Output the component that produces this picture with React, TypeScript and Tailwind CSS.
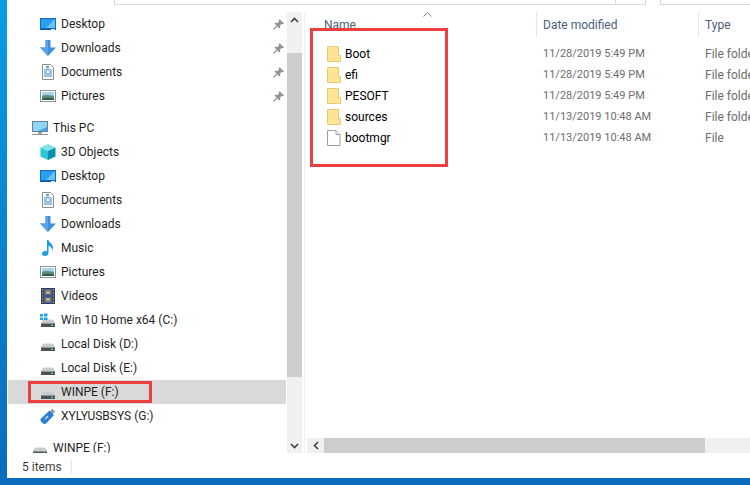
const FONT = "font-['Roboto','Open_Sans',sans-serif]";

function DesktopIcon() {
  return (
    <svg width="16" height="16" viewBox="0 0 16 16">
      <rect x="0" y="2" width="16" height="12" fill="#0a6cc4" />
      <path d="M1 3h14v9H1z" fill="#2a9df0" />
      <path d="M6 12L15 3v9z" fill="#6cc3f5" />
      <rect x="0" y="13" width="16" height="1" fill="#0a5aa8" />
      <rect x="11" y="13" width="4" height="1" fill="#cfe6f7" />
    </svg>
  );
}

function DownloadIcon() {
  return (
    <svg width="16" height="16" viewBox="0 0 16 16">
      <path d="M5.500 0h5v7.500H16L8 16 0 7.500h5.500z" fill="#3f8fdd" />
      <path d="M5.500 0H8v16L0 7.500h5.500z" fill="#5aa5e8" />
    </svg>
  );
}

function DocumentIcon() {
  return (
    <svg width="16" height="16" viewBox="0 0 16 16">
      <path d="M2.500 0.500h8l3 3v12h-11z" fill="#fff" stroke="#8a8f94" />
      <path d="M4 6h8M4 8h3M9 8h3M4 10h8M4 12h8" stroke="#3b88c8" />
      <path d="M6 2.500h3M6 4h3" stroke="#3b88c8" />
    </svg>
  );
}

function PictureIcon() {
  return (
    <svg width="16" height="16" viewBox="0 0 16 16">
      <rect x="0.500" y="2.500" width="15" height="11" fill="#fff" stroke="#8d9296" />
      <rect x="2" y="4" width="12" height="4" fill="#a9d3ec" />
      <path d="M2 8c3-1.500 6-1 12 0v4H2z" fill="#5f8a82" />
      <path d="M2 10.500c4-1 8-.5 12 0V12H2z" fill="#34524e" />
    </svg>
  );
}

function PcIcon() {
  return (
    <svg width="16" height="16" viewBox="0 0 16 16">
      <rect x="0.500" y="1.500" width="15" height="10" fill="#3fa9e8" stroke="#6b7f8e" />
      <path d="M1 2h14v5L6 11H1z" fill="#8fd6f7" />
      <rect x="6" y="12" width="4" height="2" fill="#9aa6ad" />
      <rect x="0" y="14" width="16" height="1" fill="#8d99a1" />
    </svg>
  );
}

function CubeIcon() {
  return (
    <svg width="16" height="16" viewBox="0 0 16 16">
      <path d="M8 0l7.500 3.500L8 7 .5 3.500z" fill="#7fe3ea" />
      <path d="M.5 3.500L8 7v9L.5 12.500z" fill="#2cc5d6" />
      <path d="M15.500 3.500L8 7v9l7.500-3.500z" fill="#0f8fb0" />
    </svg>
  );
}

function MusicIcon() {
  return (
    <svg width="16" height="16" viewBox="0 0 16 16">
      <path d="M7 0h1.500c.3 2.500 4.500 3.500 4.500 7.500 0 1-.3 2-1 3 .2-2.500-1.300-4-3.500-4.800V13c0 1.800-1.700 3-3.500 3S2 15 2 13.600 3.600 11 5.200 11c.7 0 1.300.1 1.800.4z" fill="#1e9be8" />
    </svg>
  );
}

function VideoIcon() {
  return (
    <svg width="16" height="16" viewBox="0 0 16 16">
      <rect x="1" y="0" width="14" height="16" fill="#3c3f44" />
      <path d="M2 2h1M2 5h1M2 8h1M2 11h1M2 14h1M13 2h1M13 5h1M13 8h1M13 11h1M13 14h1" stroke="#d8d8d8" />
      <rect x="4" y="1" width="8" height="6.500" fill="#4a6fb5" />
      <rect x="4" y="8.500" width="8" height="6.500" fill="#4a6fb5" />
      <path d="M6 3h4v3H6zM6 10h4v3H6z" fill="#d9a93a" />
    </svg>
  );
}

function DriveIcon({ win = false }: { win?: boolean }) {
  return (
    <svg width="16" height="16" viewBox="0 0 16 16">
      <path d="M3 7.500h10l2 3.500H1z" fill="#c9cccf" />
      <rect x="1" y="11" width="14" height="4" fill="#4d5257" />
      <rect x="1" y="11" width="14" height="1" fill="#8b9095" />
      <rect x="11" y="12.500" width="2" height="1.500" fill="#3fcf5a" />
      {win && <path d="M0 2h3v2.500H0zM4 1.500h3.500V4.500H4zM0 5.500h3V8H0zM4 5.500h3.500V8H4z" fill="#19a5e6" />}
    </svg>
  );
}

function UsbIcon() {
  return (
    <svg width="16" height="16" viewBox="0 0 16 16">
      <path d="M10 4l2-3.500 3.500 3L13 6z" fill="#9aa1a8" />
      <path d="M9.500 2.500l4.500 4.500-8 8.500c-1 .7-2 .7-3 0L1 13.500c-.7-1-.7-2 0-3z" fill="#2c7fd0" />
      <path d="M5 11l3-3" stroke="#bcdcf5" strokeWidth="1.500" />
    </svg>
  );
}

function PinIcon() {
  return (
    <svg width="11" height="11" viewBox="0 0 11 11">
      <path d="M6.500 0L11 4.500 9.800 5.200 8.800 4.800 7 6.800 7.300 8.800 6.300 9.600 1.500 4.800 2.300 3.800 4.300 4.100 6.200 2.200 5.800 1.200z" fill="#8b949c" />
      <path d="M3.600 7.300L0.600 10.400" stroke="#8b949c" strokeWidth="1.300" />
    </svg>
  );
}

function FolderIcon() {
  return (
    <svg width="14" height="16" viewBox="0 0 14 16">
      <path d="M0.500 0.500h11v15h-11z" fill="#fde594" stroke="#e8cb7a" />
      <path d="M11.500 9.500h2v6h-2z" fill="#fde594" stroke="#e8cb7a" />
      <path d="M11 10h1.500v5H11z" fill="#fde594" />
    </svg>
  );
}

function FileIcon() {
  return (
    <svg width="14" height="16" viewBox="0 0 14 16">
      <path d="M0.500 0.500h8.500l4 4v11h-12.500z" fill="#fff" stroke="#9aa0a6" />
      <path d="M9 .5v4h4" fill="#f3f3f3" stroke="#9aa0a6" />
    </svg>
  );
}

function Row({ icon, label, level = 2, pinned = false, selected = false }: { icon: React.ReactNode; label: string; level?: number; pinned?: boolean; selected?: boolean }) {
  return (
    <div className={`relative mx-px flex h-6 shrink-0 items-center ${selected ? "bg-[#d9d9d9]" : ""} ${level === 2 ? "pl-[32px]" : "pl-[24px]"}`}>
      <span className="flex w-4 shrink-0 items-center justify-center">{icon}</span>
      <span className="ml-[5px] whitespace-nowrap text-[12px] text-[#1f1f1f]">{label}</span>
      {pinned && (
        <span className="absolute left-[265px] top-[7px]">
          <PinIcon />
        </span>
      )}
      {selected && <div className="absolute left-[20px] top-[1px] h-[22px] w-[124px] border-[3px] border-[#ec4040]" />}
    </div>
  );
}

const FILES = [
  { name: "Boot", date: "11/28/2019 5:49 PM", type: "File folder", folder: true },
  { name: "efi", date: "11/28/2019 5:49 PM", type: "File folder", folder: true },
  { name: "PESOFT", date: "11/28/2019 5:49 PM", type: "File folder", folder: true },
  { name: "sources", date: "11/13/2019 10:48 AM", type: "File folder", folder: true },
  { name: "bootmgr", date: "11/13/2019 10:48 AM", type: "File", folder: false },
];

export default function App() {
  return (
    <div className={`flex h-[485px] w-[750px] flex-col overflow-hidden bg-gradient-to-b from-[#0a9ce2] to-[#0a6cbc] pb-[7px] pl-[7px] ${FONT}`}>
      <div className="flex min-h-0 flex-1 flex-col bg-white">
        {/* toolbar remains */}
        <div className="flex h-3 shrink-0 items-start">
          <div className="ml-[107px] flex h-[5px] w-[532px] justify-end border-b border-l border-r border-[#d9d9d9]">
            <div className="mr-[29px] h-full w-px bg-[#d9d9d9]" />
          </div>
          <div className="ml-[14px] h-[5px] flex-1 border-b border-l border-[#d9d9d9]" />
        </div>

        <div className="flex h-[441px] shrink-0">
          <div className="flex h-full w-[280px] shrink-0 flex-col overflow-hidden">
            <Row icon={<DesktopIcon />} label="Desktop" pinned />
            <Row icon={<DownloadIcon />} label="Downloads" pinned />
            <Row icon={<DocumentIcon />} label="Documents" pinned />
            <Row icon={<PictureIcon />} label="Pictures" pinned />
            <div className="mt-2" />
            <Row icon={<PcIcon />} label="This PC" level={1} />
            <Row icon={<CubeIcon />} label="3D Objects" />
            <Row icon={<DesktopIcon />} label="Desktop" />
            <Row icon={<DocumentIcon />} label="Documents" />
            <Row icon={<DownloadIcon />} label="Downloads" />
            <Row icon={<MusicIcon />} label="Music" />
            <Row icon={<PictureIcon />} label="Pictures" />
            <Row icon={<VideoIcon />} label="Videos" />
            <Row icon={<DriveIcon win />} label="Win 10 Home x64 (C:)" />
            <Row icon={<DriveIcon />} label="Local Disk (D:)" />
            <Row icon={<DriveIcon />} label="Local Disk (E:)" />
            <Row icon={<DriveIcon />} label="WINPE (F:)" selected />
            <Row icon={<UsbIcon />} label="XYLYUSBSYS (G:)" />
            <div className="mt-2" />
            <Row icon={<DriveIcon />} label="WINPE (F:)" level={1} />
          </div>

          {/* sidebar scrollbar */}
          <div className="flex h-full w-[15px] shrink-0 flex-col bg-[#f0f0f0]">
            <div className="flex h-[41px] shrink-0 justify-center pt-[5px]">
              <svg width="9" height="6" viewBox="0 0 9 6">
                <path d="M1 5l3.500-3.500L8 5" fill="none" stroke="#404040" strokeWidth="1.600" />
              </svg>
            </div>
            <div className="h-[324px] shrink-0 bg-[#cdcdcd]" />
            <div className="flex flex-1 items-end justify-center pb-[4px]">
              <svg width="9" height="6" viewBox="0 0 9 6">
                <path d="M1 1l3.500 3.500L8 1" fill="none" stroke="#404040" strokeWidth="1.600" />
              </svg>
            </div>
          </div>

          <div className="mx-[2px] h-full w-px shrink-0 bg-[#f0f0f0]" />

          {/* file list */}
          <div className="relative flex min-w-0 flex-1 flex-col">
            <div className="relative flex h-[25px] shrink-0 items-center text-[12px] text-[#4c607a]">
              <span className="absolute left-[116px] top-0">
                <svg width="9" height="5" viewBox="0 0 9 5">
                  <path d="M.5 4.500L4.500.5l4 4" fill="none" stroke="#8c8c8c" />
                </svg>
              </span>
              <div className="w-[229px] shrink-0 pl-[17px]">Name</div>
              <div className="h-full w-px shrink-0 bg-[#e5e5e5]" />
              <div className="w-[161px] shrink-0 pl-[6px]">Date modified</div>
              <div className="h-full w-px shrink-0 bg-[#e5e5e5]" />
              <div className="pl-[6px]">Type</div>
            </div>

            <div className="flex min-h-0 flex-1 flex-col pt-[6px]">
              {FILES.map((f) => (
                <div key={f.name} className="flex h-[21px] shrink-0 items-center whitespace-nowrap text-[12px] text-[#6d6d6d]">
                  <div className="flex w-[230px] shrink-0 items-center pl-[20px] text-black">
                    {f.folder ? <FolderIcon /> : <FileIcon />}
                    <span className="ml-[4px]">{f.name}</span>
                  </div>
                  <div className="w-[162px] shrink-0 pl-[6px] pt-[2px] text-[11px]">{f.date}</div>
                  <div className="pl-[6px]">{f.type}</div>
                </div>
              ))}
            </div>

            <div className="absolute left-[3px] top-[16px] h-[139px] w-[138px] border-[3px] border-[#ec4040]" />

            <div className="flex h-[15px] shrink-0 bg-[#f0f0f0]">
              <div className="flex w-[17px] shrink-0 items-center justify-center">
                <svg width="6" height="9" viewBox="0 0 6 9">
                  <path d="M5 1L1.500 4.500 5 8" fill="none" stroke="#404040" strokeWidth="1.600" />
                </svg>
              </div>
              <div className="w-[381px] shrink-0 bg-[#cdcdcd]" />
            </div>
          </div>
        </div>

        {/* status bar */}
        <div className="flex min-h-0 flex-1 items-center pl-[15px] pt-[2px] text-[12px] text-[#3c3c3c]">
          <span>5 items</span>
          <div className="ml-[9px] h-[14px] w-px bg-[#e5e5e5]" />
        </div>
      </div>
    </div>
  );
}
